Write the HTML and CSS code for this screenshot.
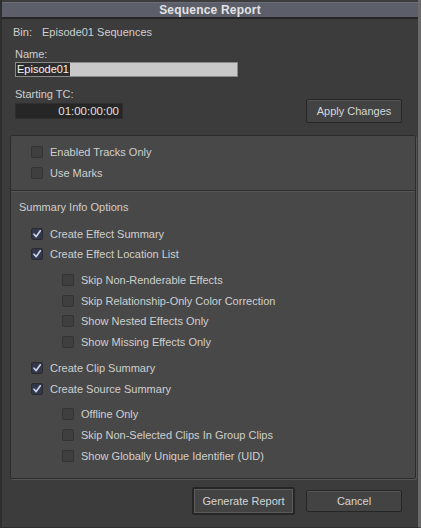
FILE: index.html
```html
<!DOCTYPE html>
<html>
<head>
<meta charset="utf-8">
<link rel="stylesheet" href="styles.css">
</head>
<body>
<div class="dialog">
  <div class="titlebar">Sequence Report</div>
  <div class="content">
    <div class="bin"><span class="bin-label">Bin:</span><span>Episode01 Sequences</span></div>
    <div class="field-label name-label">Name:</div>
    <div class="name-input"><span class="sel">Episode01</span></div>
    <div class="field-label tc-label">Starting TC:</div>
    <div class="tc-row">
      <div class="tc-input">01:00:00:00</div>
      <div class="btn apply">Apply Changes</div>
    </div>
    <div class="panel">
      <div class="group top-group">
        <div class="row"><span class="cb"></span>Enabled Tracks Only</div>
        <div class="row"><span class="cb"></span>Use Marks</div>
      </div>
      <div class="sep"></div>
      <div class="section-label">Summary Info Options</div>
      <div class="group main-group">
        <div class="row"><span class="cb on"><svg viewBox="0 0 12 12"><path d="M3 6.2 L5.2 8.6 L9.3 2.8"/></svg></span>Create Effect Summary</div>
        <div class="row"><span class="cb on"><svg viewBox="0 0 12 12"><path d="M3 6.2 L5.2 8.6 L9.3 2.8"/></svg></span>Create Effect Location List</div>
        <div class="sub">
          <div class="row"><span class="cb"></span>Skip Non-Renderable Effects</div>
          <div class="row"><span class="cb"></span>Skip Relationship-Only Color Correction</div>
          <div class="row"><span class="cb"></span>Show Nested Effects Only</div>
          <div class="row"><span class="cb"></span>Show Missing Effects Only</div>
        </div>
        <div class="row gap"><span class="cb on"><svg viewBox="0 0 12 12"><path d="M3 6.2 L5.2 8.6 L9.3 2.8"/></svg></span>Create Clip Summary</div>
        <div class="row"><span class="cb on"><svg viewBox="0 0 12 12"><path d="M3 6.2 L5.2 8.6 L9.3 2.8"/></svg></span>Create Source Summary</div>
        <div class="sub">
          <div class="row"><span class="cb"></span>Offline Only</div>
          <div class="row"><span class="cb"></span>Skip Non-Selected Clips In Group Clips</div>
          <div class="row"><span class="cb"></span>Show Globally Unique Identifier (UID)</div>
        </div>
      </div>
    </div>
    <div class="footer">
      <div class="btn generate">Generate Report</div>
      <div class="btn cancel">Cancel</div>
    </div>
  </div>
</div>
</body>
</html>
```

FILE: styles.css
```css
html, body {
  margin: 0;
  padding: 0;
  background: #3b3b3b;
}
.dialog {
  width: 421px;
  height: 528px;
  box-sizing: border-box;
  background: #3c3c3c;
  border-left: 2px solid #2e2e2e;
  border-right: 3px solid #6a6a6a;
  border-bottom: 1px solid #2e2e2e;
  font-family: "Liberation Sans", Arial, sans-serif;
  font-size: 11px;
  color: #cfcfcf;
  display: flex;
  flex-direction: column;
}
.titlebar {
  height: 14px;
  margin-top: 2px;
  background: #5c5f69;
  border-top: 1px solid #6a6d77;
  border-bottom: 2px solid #262626;
  color: #e2e2e6;
  font-weight: bold;
  font-size: 12px;
  line-height: 14px;
  text-align: center;
  letter-spacing: 0.2px;
}
.content {
  display: flex;
  flex-direction: column;
  padding: 0 3px 0 6px;
}
.bin {
  margin-top: 6px;
  padding-left: 5px;
  height: 14px;
  line-height: 14px;
  display: flex;
}
.bin-label { width: 29px; }
.field-label {
  padding-left: 7px;
  height: 13px;
  line-height: 13px;
}
.name-label { margin-top: 9px; }
.name-input {
  margin-left: 7px;
  margin-top: 1px;
  width: 223px;
  height: 15px;
  background: #c9c9c9;
  border: 1px solid #8a8a8a;
  box-sizing: border-box;
  display: flex;
  align-items: center;
}
.sel {
  background: #2c2c2c;
  color: #f4f4f4;
  height: 13px;
  line-height: 13px;
  padding: 0 1px 0 1px;
}
.tc-label { margin-top: 11px; }
.tc-row {
  display: flex;
  align-items: center;
  justify-content: space-between;
  padding-right: 13px;
  margin-top: -2px;
}
.tc-input {
  margin-left: 7px;
  margin-top: 0;
  width: 108px;
  height: 16px;
  box-sizing: border-box;
  background: #262626;
  border: 1px solid #2f2f2f;
  color: #e0e0e0;
  text-align: right;
  line-height: 14px;
  padding-right: 3px;
  font-size: 11.5px;
}
.btn {
  box-sizing: border-box;
  border: 1px solid #262626;
  background: #434343;
  box-shadow: inset 0 1px 0 #555;
  color: #d6d6d6;
  text-align: center;
  border-radius: 2px;
}
.apply {
  width: 96px;
  height: 24px;
  line-height: 22px;
}
.panel {
  margin-top: 12px;
  margin-left: 2px;
  width: 406px;
  height: 344px;
  box-sizing: border-box;
  background: #484848;
  border: 1px solid #2c2c2c;
  border-radius: 2px;
  box-shadow: 1px 1px 0 #555;
  display: flex;
  flex-direction: column;
}
.group {
  display: flex;
  flex-direction: column;
  padding-left: 20px;
}
.top-group { padding-top: 6px; }
.row {
  height: 20.7px;
  display: flex;
  align-items: center;
  gap: 7px;
  white-space: nowrap;
}
.cb {
  width: 12px;
  height: 12px;
  box-sizing: border-box;
  border: 1px solid #333;
  background: #3f3f3f;
  border-radius: 2px;
  flex: none;
  display: flex;
}
.cb.on {
  background: #33374a;
  border-color: #2a2a30;
}
.cb svg {
  width: 12px;
  height: 12px;
  margin: -1px;
}
.cb svg path {
  fill: none;
  stroke: #c8d2ec;
  stroke-width: 1.7;
  stroke-linecap: round;
  stroke-linejoin: round;
}
.sep {
  margin-top: 7px;
  height: 1px;
  background: #2e2e2e;
  border-bottom: 1px solid #575757;
}
.section-label {
  margin-top: 8px;
  padding-left: 8px;
  height: 14px;
  line-height: 14px;
}
.main-group { margin-top: 9px; }
.sub {
  display: flex;
  flex-direction: column;
  padding-left: 31px;
  margin-top: 5px;
}
.gap { margin-top: 5px; }
.footer {
  display: flex;
  justify-content: flex-end;
  gap: 11px;
  padding-right: 13px;
  margin-top: 8px;
}
.generate {
  width: 103px;
  height: 28px;
  line-height: 24px;
  border: 2px solid #262626;
  outline: 1px solid #5a5a5a;
  outline-offset: -3px;
}
.cancel {
  width: 96px;
  height: 22px;
  line-height: 20px;
  margin-top: 3px;
}
```
